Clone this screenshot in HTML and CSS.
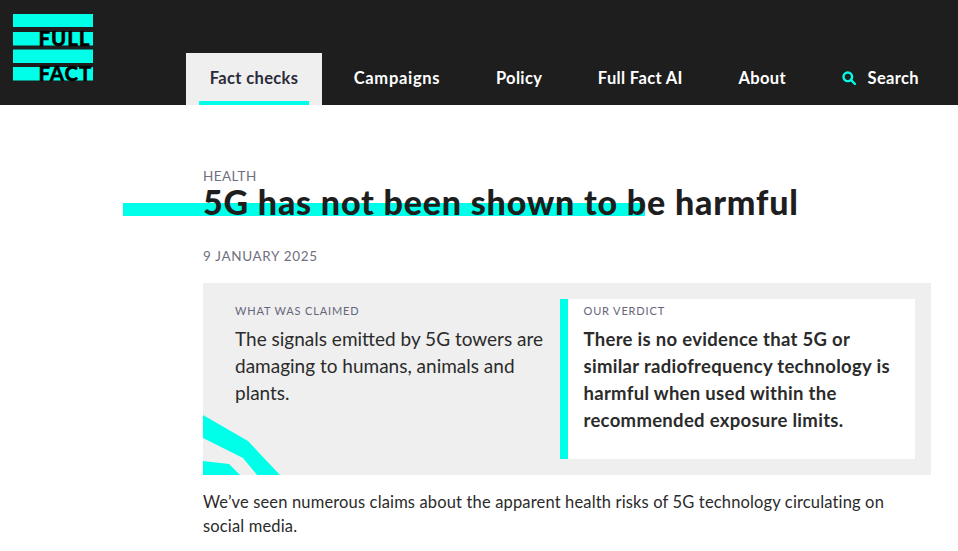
FILE: index.html
```html
<!DOCTYPE html>
<html>
<head>
<meta charset="utf-8">
<meta name="viewport" content="width=device-width, initial-scale=1.0">
<title>5G has not been shown to be harmful</title>
<link rel="stylesheet" href="styles.css">
</head>
<body>
<header class="site-header">
  <a class="logo" href="#" aria-label="Full Fact">
    <svg class="logo-mark" width="80" height="68" viewBox="0 0 80 68">
      <rect x="0" y="0" width="80" height="13" fill="#00ffe8"/>
      <rect x="0" y="18" width="80" height="13.5" fill="#00ffe8"/>
      <rect x="0" y="35.5" width="80" height="13.5" fill="#00ffe8"/>
      <rect x="0" y="53" width="80" height="13.5" fill="#00ffe8"/>
      <text class="logo-text" x="25.5" y="31.5">FULL</text>
      <text class="logo-text" x="25.5" y="67">FACT</text>
    </svg>
  </a>
  <nav class="main-nav">
    <a class="nav-item nav-item-active" href="#">Fact checks</a>
    <a class="nav-item nav-campaigns" href="#">Campaigns</a>
    <a class="nav-item" href="#">Policy</a>
    <a class="nav-item" href="#">Full Fact AI</a>
    <a class="nav-item" href="#">About</a>
    <a class="nav-item nav-search" href="#">
      <svg width="14" height="14" viewBox="0 0 14 14" fill="none" stroke="#00ffe8" stroke-width="2.4">
        <circle cx="5.8" cy="5.8" r="4.3"/>
        <path d="M9 9l4 4" stroke-linecap="round"/>
      </svg>
      Search
    </a>
  </nav>
</header>
<main class="article">
  <p class="topic">HEALTH</p>
  <h1 class="headline">5G has not been shown to be harmful</h1>
  <p class="date">9 JANUARY 2025</p>
  <section class="claim-box">
    <svg class="claim-deco" width="78" height="60" viewBox="0 0 78 60">
      <path d="M0 0L45 26L77 60H54L40 43L0 23Z" fill="#00ffe8"/>
      <path d="M0 46L26 49L37 60H0Z" fill="#00ffe8"/>
    </svg>
    <div class="claim">
      <h2 class="box-label">WHAT WAS CLAIMED</h2>
      <p class="claim-text">The signals emitted by 5G towers are damaging to humans, animals and plants.</p>
    </div>
    <div class="verdict">
      <h2 class="box-label">OUR VERDICT</h2>
      <p class="verdict-text">There is no evidence that 5G or similar radiofrequency technology is harmful when used within the recommended exposure limits.</p>
    </div>
  </section>
  <p class="intro">We’ve seen numerous claims about the apparent health risks of 5G technology circulating on social media.</p>
</main>
</body>
</html>
```

FILE: styles.css
```css
* { box-sizing: border-box; }
html, body { height: 551px; overflow: hidden; }
body {
  margin: 0;
  font-family: "Lato", "Noto Sans", sans-serif;
  color: #1e1e1e;
  background: #fff;
}
a { text-decoration: none; color: inherit; }
h1, h2, p { margin: 0; }

.site-header {
  display: flex;
  justify-content: space-between;
  align-items: flex-end;
  height: 105px;
  background: #1e1e1e;
  position: relative;
}
.logo {
  align-self: flex-start;
  margin: 14px 0 0 13px;
  line-height: 0;
}
.logo-mark { overflow: visible; }
.logo-text {
  font-family: "Lato", sans-serif;
  font-weight: 900;
  font-size: 20.5px;
  letter-spacing: 0.9px;
  fill: #000;
  stroke: #000;
  stroke-width: 0.4px;
}
.main-nav {
  display: flex;
  align-items: stretch;
  height: 52px;
  margin-right: 15px;
}
.nav-item {
  display: flex;
  align-items: center;
  gap: 12px;
  padding: 0 24px 2px;
  margin-left: 7.6px;
  font-size: 16.5px;
  font-weight: 700;
  letter-spacing: 0.35px;
  white-space: nowrap;
  color: #fff;
}
.nav-campaigns { letter-spacing: 0.7px; }
.nav-item-active {
  position: relative;
  width: 136px;
  margin-left: 0;
  padding: 0 0 2px;
  justify-content: center;
  background: #efefef;
  color: #2b2b3a;
}
.nav-item-active::after {
  content: "";
  position: absolute;
  left: 13px;
  right: 13px;
  bottom: 0;
  height: 4px;
  background: #00ffe8;
}

.article {
  position: relative;
  padding: 64px 27px 0 203px;
}
.topic {
  font-size: 13.5px;
  line-height: 14px;
  letter-spacing: 0.4px;
  color: #6f6f80;
}
.headline {
  position: relative;
  font-size: 34px;
  line-height: 38px;
  font-weight: 900;
  letter-spacing: 0.8px;
}
.headline::before {
  content: "";
  position: absolute;
  z-index: -1;
  left: -80px;
  top: 20px;
  width: 522px;
  height: 13px;
  background: #00ffe8;
}
.date {
  margin-top: 26px;
  font-size: 13.5px;
  line-height: 18px;
  letter-spacing: 0.65px;
  color: #6f6f80;
}
.claim-box {
  position: relative;
  display: flex;
  justify-content: space-between;
  height: 192px;
  margin-top: 18px;
  padding: 16px;
  background: #efefef;
}
.claim-deco {
  position: absolute;
  left: 0;
  bottom: 0;
}
.claim {
  width: 325px;
  margin-left: 16px;
  padding-top: 4px;
}
.box-label {
  font-size: 11px;
  line-height: 16px;
  font-weight: 400;
  letter-spacing: 0.85px;
  color: #66667a;
}
.claim-text {
  margin-top: 6px;
  font-size: 19px;
  line-height: 27px;
  color: #2b2b2b;
}
.verdict {
  width: 356px;
  padding: 4px 16px 0;
  background: #fff;
  border-left: 8px solid #00ffe8;
}
.verdict-text {
  margin-top: 7px;
  font-size: 18.5px;
  line-height: 27px;
  font-weight: 700;
  letter-spacing: 0.3px;
  color: #2b2b2b;
}
.intro {
  max-width: 700px;
  margin-top: 15px;
  font-size: 16.5px;
  line-height: 24px;
  letter-spacing: 0.15px;
  color: #2b2b2b;
}
```
